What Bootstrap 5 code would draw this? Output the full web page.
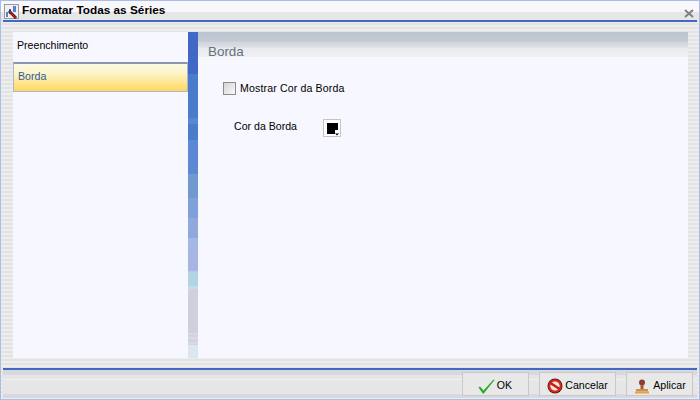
<!DOCTYPE html>
<html lang="pt">
<head>
<meta charset="utf-8">
<link href="https://cdn.jsdelivr.net/npm/bootstrap@5.3.0/dist/css/bootstrap.min.css" rel="stylesheet">
<style>
html,body{margin:0;height:400px;overflow:hidden;background:#e8e8e8;}
body{font-family:"Liberation Sans",Tahoma,sans-serif;font-size:10.6px;color:#000;}
.dlg{width:700px;height:400px;box-sizing:border-box;border:1px solid #a9bde8;padding:0 2px;background:repeating-linear-gradient(#ededed 0,#ededed 2px,#e3e3e3 2px,#e3e3e3 4px);}
.tbar{flex:0 0 21px;margin:0 -2px;padding:0 5px 0 3px;background:linear-gradient(#f8f8fc 0,#f8f8fc 11px,#e6e6e6 11px);position:relative;}
.tbar::after{content:"";position:absolute;left:2px;right:2px;bottom:0;height:2px;background:#4068c4;}
.ticon{margin-top:3px;flex:none;}
.tgrp{gap:3px;}
.ttl{font-weight:700;font-size:11.8px;line-height:18px;}
.mid{flex:0 0 346px;padding:10px 9px 10px 10px;}
.leftp{width:175px;background:#f7f7ff;}
.it{height:30px;padding-left:4px;line-height:27px;}
.it-a{height:30px;padding-left:4px;line-height:24px;color:#2b5aa0;border:1px solid #a9b6d8;border-top:2px solid #8c96b0;background:linear-gradient(#fbfae4 0,#fcf6cc 30%,#fdeeb0 50%,#ffe48c 72%,#ffd85c 100%);}
.divd{width:10px;background:linear-gradient(#4068c4 0,#4068c4 42px,#4a7ccc 42px,#4a7ccc 86px,#5c86d0 86px,#5c86d0 92px,#4a7ccc 92px,#4a7ccc 108px,#5f88d4 108px,#5f88d4 142px,#7099d0 142px,#7099d0 166px,#80a0dc 166px,#80a0dc 186px,#90a8dc 186px,#90a8dc 206px,#a4b8e4 206px,#a4b8e4 217px,#a8b4e4 217px,#a8b4e4 238px,#b0d4e4 240px,#b0d4e4 254px,#c8dce8 254px,#c8dce8 257px,#d0d0dc 257px,#d0d0dc 301px,#dcdce4 301px,#d0d0dc 304px,#dcdce4 306px,#d0d0dc 309px,#dcdce4 311px,#d0d0dc 313px,#dce6f0 313px);}
.rightp{background:#f7f7ff;}
.hdg{height:25px;padding-left:10px;font-size:13.4px;line-height:40px;color:#66707c;background:linear-gradient(#bcc4d0 0,#c2cad4 9px,#d0d4dc 10px,#dcdfe4 15px,#e8eaee 16px,#eef0f4 100%);}
.rowchk{margin:25px 0 0 25px;gap:4px;height:13px;}
.rowchk span:last-child{letter-spacing:.13px;padding-top:1px;}
.cbx{width:13px;height:13px;border:1px solid #8c8c8c;background:linear-gradient(135deg,#d4d4d4,#fafafa);}
.rowcor{margin:24px 0 0 36px;}
.corlbl{width:89px;line-height:14px;}
.foot{flex:1;border-top:2px solid #4068c4;margin-bottom:1px;background:linear-gradient(#d8d8de 0,#d8d8de 5px,#e6e6e6 5px,#e6e6e6 9px,#f2f2f4 9px,#f2f2f4 10px,#e6e6e6 10px,#e6e6e6 24px,#d8d8de 24px);padding:2px 4px 0 0;gap:10px;}
.fbtn{height:24px;border:1px solid #c8c8c8;background:#e8e8e8;display:flex;align-items:center;justify-content:center;font-size:10.6px;padding-top:4px;}
.f1{width:67px;gap:2px;padding-right:1px}.f2{width:77px;gap:2px;}.f3{width:67px;gap:4px;padding-left:2px}
</style>
</head>
<body>
<div class="dlg d-flex flex-column">
  <div class="tbar d-flex align-items-start justify-content-between">
    <div class="d-flex align-items-start tgrp">
      <svg class="ticon" width="15" height="15" viewBox="0 0 15 15"><rect x=".5" y=".5" width="14" height="14" fill="#eef0f6" stroke="#9a9a9a"/><rect x="2" y="8" width="2" height="5" fill="#5a80c8"/><rect x="5" y="5" width="2" height="5" fill="#3a62b8"/><rect x="9" y="2" width="3" height="6" fill="#5a80c8"/><path d="M5 7l7 7" stroke="#000" stroke-width="2.6"/><path d="M5 7l7 7" stroke="#e02020" stroke-width="1.4"/></svg>
      <span class="ttl">Formatar Todas as Séries</span>
    </div>
    <svg class="mt-2" width="10" height="9" viewBox="0 0 10 9"><path d="M1 1l8 7M9 1L1 8" stroke="#808080" stroke-width="2"/></svg>
  </div>
  <div class="mid d-flex">
    <div class="leftp">
      <div class="it">Preenchimento</div>
      <div class="it-a">Borda</div>
    </div>
    <div class="divd"></div>
    <div class="rightp flex-grow-1">
      <div class="hdg">Borda</div>
      <div class="rowchk d-flex align-items-center"><span class="cbx"></span><span>Mostrar Cor da Borda</span></div>
      <div class="rowcor d-flex align-items-start"><span class="corlbl">Cor da Borda</span><svg width="18" height="18" viewBox="0 0 18 18"><rect x=".5" y=".5" width="17" height="17" fill="#fff" stroke="#c4c4c4"/><path d="M4 4h11v7h-3v4H4z" fill="#000"/><path d="M12 14.5h4l-2 2z" fill="#000"/></svg></div>
    </div>
  </div>
  <div class="foot d-flex justify-content-end">
    <div class="fbtn f1"><svg width="17" height="15" viewBox="0 0 17 15"><path d="M.5 8.5l1.5-1 3.5 4L15.5.5l1 .5L5.8 14.5h-1z" fill="#2ca82c"/></svg>OK</div>
    <div class="fbtn f2"><svg width="16" height="16" viewBox="0 0 16 16"><circle cx="8" cy="8" r="7.5" fill="#50100c"/><circle cx="8" cy="8" r="5.7" fill="#f4e8e4" stroke="#d8281c" stroke-width="2.2"/><path d="M3.5 5l9 6" stroke="#c81c14" stroke-width="2.6"/></svg>Cancelar</div>
    <div class="fbtn f3"><svg width="14" height="15" viewBox="0 0 14 15"><circle cx="7" cy="3.5" r="3" fill="#8c3c30"/><rect x="5.5" y="5.5" width="3" height="5" fill="#9c5a40"/><rect x="1" y="10" width="12" height="2.5" fill="#c89050"/><rect x="0" y="12.5" width="14" height="2" fill="#e8a040"/></svg>Aplicar</div>
  </div>
</div>
</body>
</html>
